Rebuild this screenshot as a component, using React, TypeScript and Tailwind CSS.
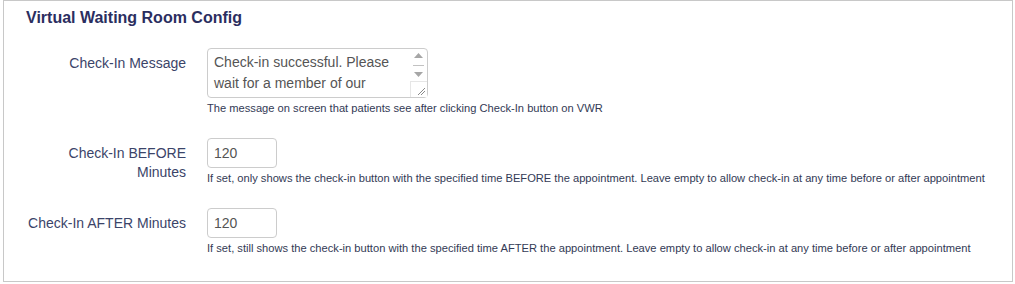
import React from "react";

const LABEL = "w-[160px] shrink-0 text-right pt-[6px] text-[14px] leading-[19px] text-[#3b4469]";
const HELP = "mt-[3px] text-[11.15px] leading-[14px] text-[#333a55] whitespace-nowrap";

function FakeScrollbar() {
  return (
    <div className="absolute right-[1px] top-[1px] bottom-[1px] w-[17px] flex flex-col items-center">
      <svg width="17" height="32" viewBox="0 0 17 32" className="block">
        <polygon points="4,9 13,9 8.5,4" fill="#a6a6a6" />
        <line x1="3" y1="16.5" x2="14" y2="16.5" stroke="#c2c2c2" strokeWidth="1" />
        <polygon points="4,23 13,23 8.5,28" fill="#a6a6a6" />
      </svg>
      <div className="mt-auto w-[17px] h-[16px] border-l border-t border-[#e6e6e6] bg-white">
        <svg width="16" height="15" viewBox="0 0 16 15" className="block">
          <line x1="7" y1="13" x2="14" y2="6" stroke="#8a8a8a" strokeWidth="1" />
          <line x1="10" y1="13" x2="14" y2="9" stroke="#8a8a8a" strokeWidth="1" />
        </svg>
      </div>
    </div>
  );
}

export default function App() {
  return (
    <div className="w-[1015px] h-[284px] bg-white pl-[3px] pr-[2px] pb-[2px]" style={{ fontFamily: '"Liberation Sans", Arial, sans-serif' }}>
      <div className="h-full border border-[#c8c8c8]">
        <h3 className="pl-[22px] pt-[8px] text-[16px] leading-[18px] font-bold text-[#2b2e5f]">
          Virtual Waiting Room Config
        </h3>

        <div className="mt-[21px] flex flex-col gap-[23px] pl-[22px]">
          {/* Check-In Message */}
          <div className="flex gap-[21px]">
            <label className={LABEL + " pt-[5px]"}>Check-In Message</label>
            <div>
              <div className="relative w-[221px] h-[50px]">
                <textarea
                  className="block w-full h-full resize-none overflow-hidden border border-[#cccccc] rounded-[4px] pl-[6px] pr-[32px] py-[3px] text-[14px] leading-[21px] text-[#555555] outline-none"
                  defaultValue="Check-in successful. Please wait for a member of our team to attend to you."
                />
                <FakeScrollbar />
              </div>
              <p className={HELP}>
                The message on screen that patients see after clicking Check-In button on VWR
              </p>
            </div>
          </div>

          {/* Check-In BEFORE Minutes */}
          <div className="flex gap-[21px]">
            <label className={LABEL}>Check-In BEFORE Minutes</label>
            <div>
              <input
                className="block w-[70px] h-[30px] border border-[#cccccc] rounded-[4px] px-[6px] text-[14px] text-[#555555] outline-none"
                defaultValue="120"
              />
              <p className={HELP}>
                If set, only shows the check-in button with the specified time BEFORE the appointment. Leave empty to allow check-in at any time before or after appointment
              </p>
            </div>
          </div>

          {/* Check-In AFTER Minutes */}
          <div className="flex gap-[21px]">
            <label className={LABEL}>Check-In AFTER Minutes</label>
            <div>
              <input
                className="block w-[70px] h-[30px] border border-[#cccccc] rounded-[4px] px-[6px] text-[14px] text-[#555555] outline-none"
                defaultValue="120"
              />
              <p className={HELP}>
                If set, still shows the check-in button with the specified time AFTER the appointment. Leave empty to allow check-in at any time before or after appointment
              </p>
            </div>
          </div>
        </div>
      </div>
    </div>
  );
}
